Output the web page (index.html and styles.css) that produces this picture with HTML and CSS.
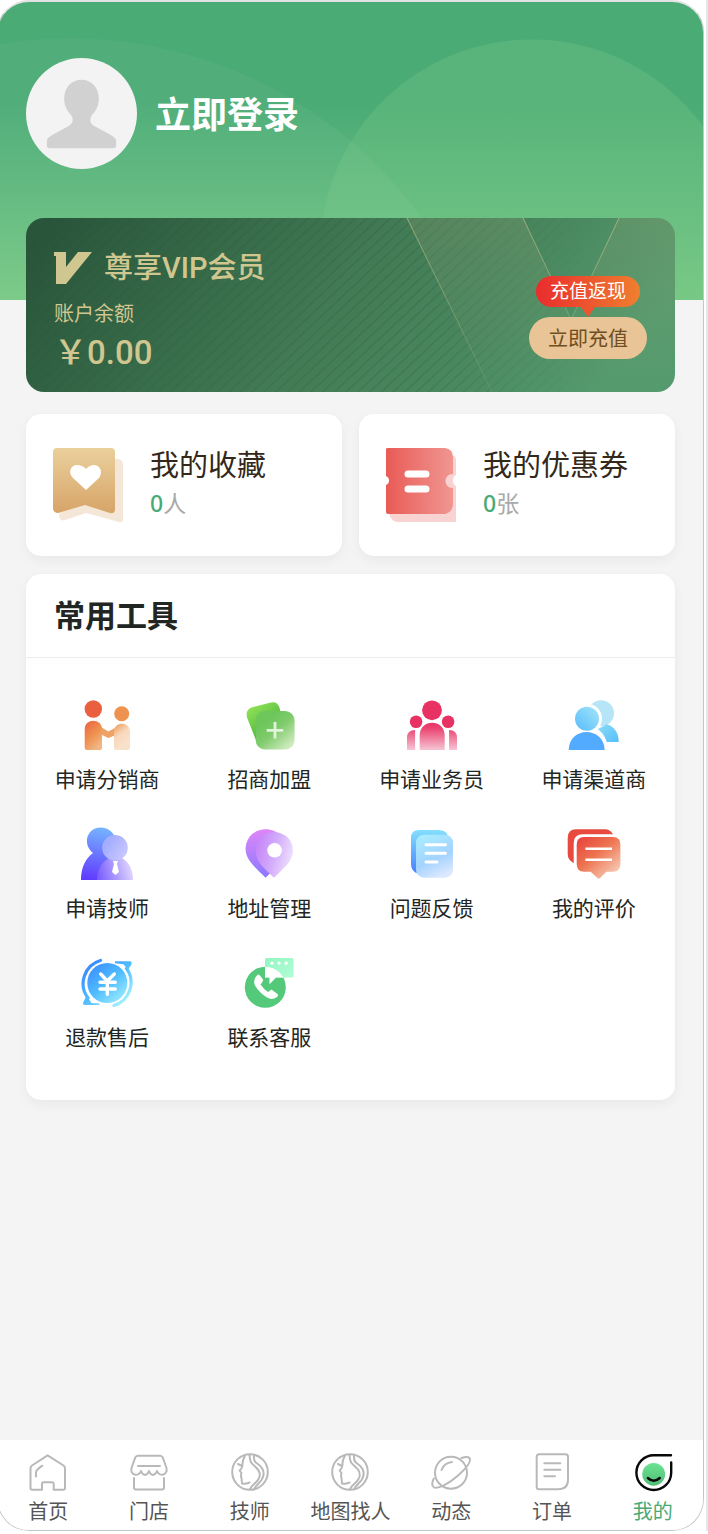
FILE: index.html
```html
<!DOCTYPE html>
<html lang="zh-CN">
<head>
<meta charset="utf-8">
<meta name="viewport" content="width=device-width, initial-scale=1">
<title>我的</title>
<link rel="stylesheet" href="styles.css">
</head>
<body>
<div class="phone">
  <main class="content">
    <a class="profile" href="#login">
      <svg class="avatar" viewBox="0 0 112 112" aria-hidden="true">
        <circle cx="56" cy="56" r="56" fill="#f3f3f3"/>
        <path d="M56 22c10 0 17.500 8 17.500 19 0 7-3 12-6.500 16-3 4-3 8 1 11l18 10c4 2.500 5 4 5 7v3q0 3-3 3H24q-3 0-3-3v-3c0-3 1-4.500 5-7l18-10c4-3 4-7 1-11-3.500-4-6.500-9-6.500-16 0-11 7.500-19 17.500-19z" fill="#d1d1d1"/>
      </svg>
      <h1 class="profile-name">立即登录</h1>
    </a>

    <section class="vip">
      <svg class="vip-art" viewBox="0 0 649 173" preserveAspectRatio="none" aria-hidden="true">
        <defs>
          <linearGradient id="vipBase" x1="0" y1="0.200" x2="1" y2="0.400">
            <stop offset="0" stop-color="#29553a"/><stop offset="0.500" stop-color="#417a54"/><stop offset="0.750" stop-color="#49875f"/><stop offset="1" stop-color="#549a6d"/>
          </linearGradient>
          <linearGradient id="vipPanel" x1="0" y1="0" x2="0" y2="1">
            <stop offset="0" stop-color="#9ea476" stop-opacity="0.220"/><stop offset="1" stop-color="#9ea476" stop-opacity="0"/>
          </linearGradient>
          <linearGradient id="vipGold" gradientUnits="userSpaceOnUse" x1="0" y1="0" x2="0" y2="173">
            <stop offset="0" stop-color="#c9c48d" stop-opacity="0.600"/><stop offset="1" stop-color="#c9c48d" stop-opacity="0.100"/>
          </linearGradient>
          <linearGradient id="stripeFade" x1="0" y1="0" x2="1" y2="0">
            <stop offset="0" stop-color="#fff" stop-opacity="0.300"/><stop offset="0.700" stop-color="#fff"/><stop offset="1" stop-color="#fff" stop-opacity="0"/>
          </linearGradient>
          <mask id="stripeMask"><rect width="560" height="173" fill="url(#stripeFade)"/></mask>
          <pattern id="stripes" width="8" height="8" patternUnits="userSpaceOnUse" patternTransform="rotate(47)">
            <rect width="1.500" height="8" fill="#1f4a30" opacity="0.180"/>
          </pattern>
        </defs>
        <rect width="649" height="173" fill="url(#vipBase)"/>
        <rect width="560" height="173" fill="url(#stripes)" mask="url(#stripeMask)"/>
        <path d="M381 0H497L545 101L593 0H649V173H466z" fill="url(#vipPanel)"/>
        <path d="M381 0L466 173M497 0L545 101M593 0L545 101" fill="none" stroke="url(#vipGold)"/>
      </svg>
      <div class="vip-info">
        <h2 class="vip-title">
          <svg class="vip-logo" viewBox="0 0 38 32" aria-hidden="true"><path d="M0 0h12v15L24 0h14L12 32H2V4H0z" fill="#d0c68f"/></svg>
          尊享VIP会员
        </h2>
        <p class="vip-label">账户余额</p>
        <p class="vip-amount">￥0.00</p>
      </div>
      <div class="vip-cta">
        <span class="badge">充值返现</span>
        <button class="recharge" type="button">立即充值</button>
      </div>
    </section>

    <section class="quick">
      <a class="quick-card" href="#favorites">
        <svg class="quick-icon" viewBox="0 0 70 76" aria-hidden="true">
          <defs><linearGradient id="fav" x1="0" y1="0" x2="0" y2="1"><stop offset="0" stop-color="#ead09c"/><stop offset="1" stop-color="#d7a468"/></linearGradient></defs>
          <path d="M58 12h6q6 0 6 6v54q0 4-4 3L33 66l-21 7q-6 2-6-6z" fill="#f4e7d7"/>
          <path d="M4 1h54q4 0 4 4v57q0 5-5 4L32 58 5 66q-4 0-5-4V5q0-4 4-4z" fill="url(#fav)"/>
          <path d="M33 43L20 31c-6-7-1-13 4-13 4 0 6 1 9 4 3-3 5-4 8-4 5 0 10 6 5 13z" fill="#fff"/>
        </svg>
        <div class="quick-text"><h3 class="quick-title">我的收藏</h3><p class="quick-count"><b>0</b>人</p></div>
      </a>
      <a class="quick-card" href="#coupons">
        <svg class="quick-icon" viewBox="0 0 70 76" aria-hidden="true">
          <defs><linearGradient id="coupon"><stop offset="0" stop-color="#e95b56"/><stop offset="1" stop-color="#f09692"/></linearGradient></defs>
          <path d="M12 75q-7 0-9-9L66 8q4 1 4 5v62z" fill="#f9d3d1"/>
          <path d="M70 28c-4 1-4 10 0 11z" fill="#fff"/>
          <path d="M0 2q0-1 2-1h57q8 1 8 9v17c-10 0-10 14 0 14v16q0 8-8 10H2q-2 0-2-2V38c4-1 4-8 0-9z" fill="url(#coupon)"/>
          <path d="M22 27h18M22 42h18" stroke="#fff" stroke-width="7" stroke-linecap="round"/>
        </svg>
        <div class="quick-text"><h3 class="quick-title">我的优惠券</h3><p class="quick-count"><b>0</b>张</p></div>
      </a>
    </section>

    <section class="tools">
      <h2 class="tools-title">常用工具</h2>
      <div class="tools-grid">
        <a class="tool" href="#distributor">
          <svg class="tool-icon" viewBox="0 0 56 56" aria-hidden="true">
            <defs><linearGradient id="t1" gradientUnits="userSpaceOnUse" x1="14" y1="12" x2="44" y2="50"><stop offset="0" stop-color="#ea5f3e"/><stop offset="0.500" stop-color="#ee9a58"/><stop offset="0.750" stop-color="#f8d9bd"/><stop offset="1" stop-color="#f9e2cc"/></linearGradient>
            <linearGradient id="t1a" x1="0" y1="0" x2="0.600" y2="1"><stop offset="0" stop-color="#ea613f"/><stop offset="0.600" stop-color="#ee9453"/><stop offset="1" stop-color="#f2b684"/></linearGradient></defs>
            <circle cx="14.300" cy="11" r="8.700" fill="#ea5f3e"/><circle cx="42.700" cy="15.700" r="7.500" fill="#ee9250"/>
            <path d="M22 29l7.300 4.500L37 29.500V37l-7.700 3L22 36.500z" fill="#efa266"/>
            <path d="M5.700 31c0-11 17.300-11 17.300 0v19q0 2-2 2H7.700q-2 0-2-2z" fill="url(#t1a)"/>
            <path d="M35 33.500c0-10.500 16-10.500 16 0V50q0 2-2 2H37q-2 0-2-2z" fill="url(#t1)"/>
          </svg>
          <span class="tool-label">申请分销商</span>
        </a>
        <a class="tool" href="#join">
          <svg class="tool-icon" viewBox="0 0 56 56" aria-hidden="true">
            <defs><linearGradient id="t2a" x1="0" y1="0" x2="0.700" y2="1"><stop offset="0" stop-color="#9bea5a"/><stop offset="1" stop-color="#3da737"/></linearGradient>
            <linearGradient id="t2b" x1="0.300" y1="0.200" x2="0.900" y2="0.900"><stop offset="0" stop-color="#6cc65a"/><stop offset="0.400" stop-color="#7fcb6c"/><stop offset="1" stop-color="#cfebbf"/></linearGradient></defs>
            <path d="M12 9L30 4.500q6-1.500 8.500 5l4 20-24 14q-4-1-5-5L6 19.500Q4 11 12 9z" fill="url(#t2a)"/>
            <rect x="14.600" y="13" width="39" height="38.500" rx="9.500" fill="url(#t2b)"/>
            <path d="M34 24v16.600M25.700 32.300h16.600" stroke="#e1f4d9" stroke-width="2.800"/>
          </svg>
          <span class="tool-label">招商加盟</span>
        </a>
        <a class="tool" href="#salesman">
          <svg class="tool-icon" viewBox="0 0 56 56" aria-hidden="true">
            <defs><linearGradient id="t3" gradientUnits="userSpaceOnUse" x1="0" y1="24" x2="0" y2="52"><stop offset="0" stop-color="#e83163"/><stop offset="0.250" stop-color="#ea4874"/><stop offset="1" stop-color="#f6c5d5"/></linearGradient></defs>
            <g fill="#e83263"><circle cx="28" cy="12.300" r="9.900"/><circle cx="12.100" cy="23.700" r="6.300"/><circle cx="44.100" cy="23.700" r="6.300"/></g>
            <path d="M15.700 52V37.500c0-17 25-17 25 0V52zM3 52V40q0-8 8.100-8v20zM45.100 52V32q7.900 0 7.900 8v12z" fill="url(#t3)"/>
          </svg>
          <span class="tool-label">申请业务员</span>
        </a>
        <a class="tool" href="#channel">
          <svg class="tool-icon" viewBox="0 0 56 56" aria-hidden="true">
            <defs><linearGradient id="t4" x1="1" y1="0" x2="0" y2="1"><stop offset="0" stop-color="#a4e6f9"/><stop offset="1" stop-color="#57bcfb"/></linearGradient>
            <linearGradient id="t4b" x1="0" y1="0" x2="1" y2="1"><stop offset="0" stop-color="#8adcf7"/><stop offset="1" stop-color="#57befb"/></linearGradient></defs>
            <circle cx="35" cy="15.300" r="13" fill="#b6e5f7"/>
            <path d="M41 26.300c8 3 11.700 9 11.700 17.700H40L32 31z" fill="url(#t4b)"/>
            <circle cx="21" cy="20.700" r="15" fill="#fff"/>
            <path d="M33 32q6 5 8 13l-8-3z" fill="#fff"/>
            <circle cx="21" cy="20.700" r="12" fill="url(#t4)"/>
            <path d="M2.700 52C3 28 38 28 38.700 52z" fill="#52abff"/>
          </svg>
          <span class="tool-label">申请渠道商</span>
        </a>
        <a class="tool" href="#technician">
          <svg class="tool-icon" viewBox="0 0 56 56" aria-hidden="true">
            <defs><linearGradient id="t5a" gradientUnits="userSpaceOnUse" x1="24" y1="0" x2="14" y2="53"><stop offset="0" stop-color="#76b6ff"/><stop offset="1" stop-color="#603bff"/></linearGradient>
            <linearGradient id="t5b" gradientUnits="userSpaceOnUse" x1="24" y1="22" x2="52" y2="42"><stop offset="0" stop-color="#a4adff"/><stop offset="1" stop-color="#ddd5ff"/></linearGradient>
            <linearGradient id="t5c" gradientUnits="userSpaceOnUse" x1="20" y1="50" x2="52" y2="42"><stop offset="0" stop-color="#7c61ff"/><stop offset="1" stop-color="#ddd2ff"/></linearGradient></defs>
            <path d="M14 26C3 17 8 .6 21.700.6S42 17 32 24l8 29H2c0-13 5-22 12-27z" fill="url(#t5a)"/>
            <path d="M18 53c0-11 5-18 12-22h13c7 4 11 12 11 22z" fill="url(#t5c)"/>
            <circle cx="36" cy="20.700" r="12.800" fill="url(#t5b)"/>
            <path d="M34 34h5l-1 3 2 8-3.500 3-3.500-3 2-8z" fill="#fff"/>
          </svg>
          <span class="tool-label">申请技师</span>
        </a>
        <a class="tool" href="#address">
          <svg class="tool-icon" viewBox="0 0 56 56" aria-hidden="true">
            <defs><linearGradient id="t6a" x1="0.500" y1="0" x2="0.500" y2="1"><stop offset="0" stop-color="#df86f9"/><stop offset="1" stop-color="#8979ff"/></linearGradient>
            <linearGradient id="t6b" x1="0" y1="0.300" x2="1" y2="0.600"><stop offset="0" stop-color="#c583f8"/><stop offset="0.500" stop-color="#d3acfb"/><stop offset="1" stop-color="#efe3fe"/></linearGradient></defs>
            <path d="M24.600 2.300c12 0 20 9 20 20 0 10-9 18-20 28.400C15 41 4.600 33 4.600 22.300c0-11 8-20 20-20z" fill="url(#t6a)"/>
            <path d="M33.300 5.300c11 0 18.700 8 18.700 18.500C52 34 43 41 33 50.700 24 42 14.600 35 14.600 23.800 14.600 13 23 5.300 33.300 5.300z" fill="url(#t6b)"/>
            <circle cx="33.600" cy="23.300" r="7.300" fill="#fff"/>
          </svg>
          <span class="tool-label">地址管理</span>
        </a>
        <a class="tool" href="#feedback">
          <svg class="tool-icon" viewBox="0 0 56 56" aria-hidden="true">
            <defs><linearGradient id="t7a" x1="0" y1="0" x2="0" y2="1"><stop offset="0" stop-color="#83dffd"/><stop offset="1" stop-color="#4780ff"/></linearGradient>
            <linearGradient id="t7b" x1="0.200" y1="0" x2="0.600" y2="1"><stop offset="0" stop-color="#a9ecff"/><stop offset="0.600" stop-color="#a4d3ff"/><stop offset="1" stop-color="#dbe8ff"/></linearGradient></defs>
            <path d="M15 3h20q7 0 9 6v34l-32 3q-5-3-5-9V11q0-8 8-8z" fill="url(#t7a)"/>
            <rect x="12" y="7.700" width="37" height="43" rx="8" fill="url(#t7b)"/>
            <path d="M22 17.700h19.500M22 26.300h19.500M22 35h11" stroke="#fff" stroke-width="3" stroke-linecap="round"/>
          </svg>
          <span class="tool-label">问题反馈</span>
        </a>
        <a class="tool" href="#reviews">
          <svg class="tool-icon" viewBox="0 0 56 56" aria-hidden="true">
            <defs><linearGradient id="t8" x1="0.100" y1="0" x2="0.900" y2="0.900"><stop offset="0" stop-color="#e9453f"/><stop offset="0.450" stop-color="#ed7450"/><stop offset="1" stop-color="#f7cdb9"/></linearGradient></defs>
            <path d="M10 2.300h29q5 0 8 5v12L7.500 36q-5.800-3-5.800-9V11q0-8.700 8.300-8.700z" fill="#e84a3f"/>
            <path d="M17 7.300h33v34H7.700V16q0-8.700 9.300-8.700z" fill="#fff"/>
            <path d="M18 10h29q7.400 0 7.400 7.500V37q0 7.700-7.400 7.700h-6.500L34 51q-1.300 1.500-2.600 0l-6.700-6.300H18q-7.300 0-7.300-7.700V17.500Q10.700 10 18 10z" fill="url(#t8)"/>
            <path d="M19.400 21.700H46M19.400 32.700H46" stroke="#fff" stroke-width="2.400"/>
          </svg>
          <span class="tool-label">我的评价</span>
        </a>
        <a class="tool" href="#refund">
          <svg class="tool-icon" viewBox="0 0 56 56" aria-hidden="true">
            <defs><linearGradient id="t9" gradientUnits="userSpaceOnUse" x1="12" y1="8" x2="44" y2="46"><stop offset="0" stop-color="#3b8cff"/><stop offset="0.500" stop-color="#4fbcff"/><stop offset="1" stop-color="#a0efff"/></linearGradient></defs>
            <circle cx="28.300" cy="27" r="20" fill="url(#t9)"/>
            <g fill="none" stroke="url(#t9)" stroke-width="3.200" stroke-linecap="round"><path d="M21.500 4.500A24 24 0 0 0 9 42M35 49.500A24 24 0 0 0 47.500 12.500"/></g>
            <path d="M7.500 39.500l5 7.500 8 .4v1.600H6q-3-.3-1.500-3zM36 5.300h14.500q3.500.3 1.500 4l-3 4.200-4.500-5.200L36 7.200z" fill="url(#t9)"/>
            <path d="M21.700 18l6.600 7 7-7M21 26.300h15.300M21 33h15.300M28.300 26v12.300" fill="none" stroke="#fff" stroke-width="3.400" stroke-linecap="round"/>
          </svg>
          <span class="tool-label">退款售后</span>
        </a>
        <a class="tool" href="#service">
          <svg class="tool-icon" viewBox="0 0 56 56" aria-hidden="true">
            <defs><clipPath id="serviceDisc"><circle cx="24.300" cy="31.300" r="20.500"/></clipPath>
            <linearGradient id="t10" x1="0" y1="0" x2="1" y2="1"><stop offset="0" stop-color="#94f5c0"/><stop offset="1" stop-color="#b4ffd8"/></linearGradient></defs>
            <circle cx="24.300" cy="31.300" r="20.500" fill="#54c97a"/>
            <path d="M25.500 2H51q1.500 0 1.500 1.500V20q0 1.500-1.500 1.500H35L28.600 28v-6.500H24v-18Q24 2 25.500 2z" fill="url(#t10)"/>
            <path d="M24 2h28.300v19.500H35L28.600 28v-6.500H24z" fill="#fff" clip-path="url(#serviceDisc)"/>
            <g fill="#fff"><circle cx="31" cy="7.200" r="1.600"/><circle cx="38" cy="7.200" r="1.600"/><circle cx="45" cy="7.200" r="1.600"/></g>
            <path d="M16.500 18.700q1.500-.6 2.500.8l3 4q.6 1.500-2.500 5 3 4.500 7.500 7.500l3.500-2.500 6 4.500q1 1.500-.5 3-5 3.500-10 .5-8-5-12-12-2.500-6 2.500-10.800z" fill="#fff"/>
          </svg>
          <span class="tool-label">联系客服</span>
        </a>
      </div>
    </section>
  </main>

  <nav class="tabs" aria-label="主导航">
    <a class="tab" href="#home">
      <svg class="tab-icon" viewBox="0 0 40 40" aria-hidden="true"><path d="M19.600 3.300L4 13.500q-1.500 1-1.500 3V36q0 1.700 1.700 1.700H14V32q0-1.700 1.700-1.700h8.300q1.700 0 1.700 1.700v5.700h9.700q1.600 0 1.600-1.700V16.500q0-2-1.500-3zM8 24.500v-4q0-2.500 6.300-6.800"/></svg>
      首页
    </a>
    <a class="tab" href="#shops">
      <svg class="tab-icon" viewBox="0 0 40 40" aria-hidden="true"><path d="M9 3.700h22q2 0 2.800 2L37.500 16c1 4-1.500 6.500-4 6.700-4 .3-5.500-3.700-5.500-3.700s-1.500 4-4 4-4-4-4-4-1.500 4-4 4-4-4-4-4-1.500 4-5.500 3.700C3 22.500 1.500 19 2.500 16L6.200 5.700q.8-2 2.800-2zM9 14h22M5 26v9.500q0 2 2 2h26q2 0 2-2V26"/></svg>
      门店
    </a>
    <a class="tab" href="#technicians">
      <svg class="tab-icon" viewBox="0 0 40 40" aria-hidden="true"><circle cx="20" cy="20" r="17.800"/><path d="M15 3.500q-3 6-2.500 9.500-.5 4-3 5.500l2 2.500q-1 3 0 5l.5 5.500q3 1 7.500-1M19.500 3c.5 6 1 8 5 11 5 4 7 8 4 13-2 4-6 5-8.500 10M24 3q-.5 6 2.500 8c6 4 10 9 5 17-3 4-5 5-7 8.500M8 12l3 1.500"/></svg>
      技师
    </a>
    <a class="tab" href="#map">
      <svg class="tab-icon" viewBox="0 0 40 40" aria-hidden="true"><circle cx="20" cy="20" r="17.800"/><path d="M15 3.500q-3 6-2.500 9.500-.5 4-3 5.500l2 2.500q-1 3 0 5l.5 5.500q3 1 7.500-1M19.500 3c.5 6 1 8 5 11 5 4 7 8 4 13-2 4-6 5-8.500 10M24 3q-.5 6 2.500 8c6 4 10 9 5 17-3 4-5 5-7 8.500M8 12l3 1.500"/></svg>
      地图找人
    </a>
    <a class="tab" href="#moments">
      <svg class="tab-icon" viewBox="0 0 40 40" aria-hidden="true"><circle cx="20" cy="20.700" r="16"/><path d="M30.500 6q6-2 8 0c2 3-3 10-12 18S7 37 3 35.300q-3.500-2-.2-8.800M10.500 18q2.500-7 10.500-8"/></svg>
      动态
    </a>
    <a class="tab" href="#orders">
      <svg class="tab-icon" viewBox="0 0 40 40" aria-hidden="true"><path d="M7 2.200h26.500q2.500 0 2.500 2.500v23q0 9.500-10 9.500H7q-2.300 0-2.300-2.500v-30q0-2.500 2.300-2.500zM12.300 11.300h16M12.300 17.700h16M12.300 24.300H23"/></svg>
      订单
    </a>
    <a class="tab tab-active" href="#mine" aria-current="page">
      <svg class="tab-icon" viewBox="0 0 40 40" aria-hidden="true">
        <defs><linearGradient id="mine" x1="0" y1="0" x2="0" y2="1"><stop offset="0" stop-color="#6be293"/><stop offset="1" stop-color="#52bd76"/></linearGradient></defs>
        <circle cx="20.700" cy="22.300" r="11.400" fill="url(#mine)" stroke="none"/>
        <path d="M38 3.200H20.700A17.400 17.400 0 1 0 38.200 20.700V10.500" stroke="#080808" stroke-width="2.400"/>
        <path d="M14.800 26q6 5.500 12 0" stroke="#080808" stroke-width="2.400"/>
      </svg>
      我的
    </a>
  </nav>
</div>
</body>
</html>
```

FILE: styles.css
```css
* {
  box-sizing: border-box;
}

body {
  margin: 0;
  padding-right: 2px;
  overflow-x: hidden;
  background: #fff;
  border-right: 2px solid #e4e7f0;
  font-family: "Liberation Sans", "Noto Sans CJK SC", sans-serif;
  color: #222623;
}

h1,
h2,
h3,
p {
  margin: 0;
}

a {
  color: inherit;
  text-decoration: none;
}

svg {
  display: block;
  flex: none;
}

.phone {
  display: flex;
  flex-direction: column;
  min-height: calc(100vh - 3px);
  margin-left: -3px;
  overflow: hidden;
  background: #f4f4f4;
  border: 1px solid #c4c8c5;
  border-top: 2px solid #e2e2e2;
  border-radius: 32px;
}

.content {
  flex: 1;
  padding: 56px 28px 28px;
  background:
    radial-gradient(circle at 72px 471px, rgb(255 255 255 / 4%) 434px, transparent 435px) 0 0 / 100% 298px no-repeat,
    radial-gradient(circle at right 171px top 249px, rgb(120 200 135 / 30%) 211px, transparent 212px) 0 0 / 100% 298px no-repeat,
    linear-gradient(#4aab75 100px, #64bc7f 215px, #78c984) 0 0 / 100% 298px no-repeat;
}

.profile {
  display: flex;
  align-items: center;
  gap: 18px;
  margin-bottom: 49px;
  color: #fff;
}

.avatar {
  width: 111px;
  height: 111px;
}

.profile-name {
  padding-top: 4px;
  font-size: 36px;
  line-height: 48px;
}

.vip {
  position: relative;
  display: flex;
  align-items: flex-end;
  justify-content: space-between;
  margin-bottom: 22px;
  padding: 28px 28px 17px;
  overflow: hidden;
  border-radius: 18px;
  color: #d0c68f;
}

.vip-art {
  position: absolute;
  inset: 0;
  width: 100%;
  height: 100%;
}

.vip-info,
.vip-cta {
  position: relative;
}

.vip-title {
  display: flex;
  align-items: center;
  gap: 12px;
  margin-bottom: 10px;
  font-family: Roboto, "Noto Sans CJK SC", sans-serif;
  font-size: 29px;
  font-weight: 500;
  line-height: 44px;
}

.vip-logo {
  width: 38px;
  height: 32px;
}

.vip-label {
  margin-bottom: 3px;
  font-size: 20px;
  line-height: 28px;
}

.vip-amount {
  font-family: Roboto, "Noto Sans CJK SC", sans-serif;
  font-size: 33px;
  font-weight: 500;
  line-height: 44px;
}

.vip-cta {
  display: flex;
  flex-direction: column;
  align-items: center;
  gap: 10px;
  margin-bottom: 16px;
}

.badge {
  position: relative;
  padding: 0 14px;
  border-radius: 16px;
  background: linear-gradient(90deg, #e92c2d, #ef7f2f);
  color: #fff;
  font-size: 19px;
  line-height: 31px;
}

.badge::after {
  content: "";
  position: absolute;
  top: 100%;
  left: 50%;
  margin-left: -7px;
  border: 7px solid transparent;
  border-top: 10px solid #ec552e;
  border-bottom: 0;
}

.recharge {
  padding: 2px 19px 0;
  border: 0;
  border-radius: 21px;
  background: #e9c497;
  color: #6f4e20;
  font: inherit;
  font-size: 20px;
  line-height: 40px;
}

.quick {
  display: grid;
  grid-template-columns: 1fr 1fr;
  gap: 17px;
  margin-bottom: 18px;
}

.quick-card,
.tools {
  border-radius: 15px;
  background: #fff;
  box-shadow: 0 4px 12px rgb(0 0 0 / 5%);
}

.quick-card {
  display: flex;
  align-items: center;
  gap: 27px;
  padding: 33px 27px;
}

.quick-icon {
  width: 70px;
  height: 76px;
}

.quick-text {
  padding-bottom: 4px;
}

.quick-title {
  margin-bottom: 4px;
  color: #33281a;
  font-size: 29px;
  font-weight: 400;
  line-height: 36px;
}

.quick-count {
  color: #a9a9a9;
  font-family: "Noto Sans", "Noto Sans CJK SC", sans-serif;
  font-size: 23px;
  line-height: 30px;
}

.quick-count b {
  color: #49aa75;
  font-weight: 500;
}

.tools-title {
  padding: 21px 28px 19px;
  border-bottom: 1px solid #ececec;
  font-size: 31px;
  line-height: 43px;
}

.tools-grid {
  display: grid;
  grid-template-columns: repeat(4, 1fr);
  row-gap: 33px;
  padding: 40px 0 48px;
}

.tool {
  display: flex;
  flex-direction: column;
  align-items: center;
  gap: 12px;
}

.tool-icon {
  width: 56px;
  height: 56px;
}

.tool-label {
  font-size: 21px;
  line-height: 28px;
  white-space: nowrap;
}

.tabs {
  display: grid;
  grid-template-columns: repeat(7, minmax(0, 1fr));
  padding: 12px 0 6px;
  background: #fff;
}

.tab {
  display: flex;
  flex-direction: column;
  align-items: center;
  gap: 8px;
  color: #555;
  font-size: 20px;
  line-height: 24px;
  white-space: nowrap;
}

.tab-active {
  color: #49aa75;
}

.tab-icon {
  width: 40px;
  height: 40px;
  fill: none;
  stroke: #b9b9b9;
  stroke-width: 2;
  stroke-linecap: round;
  stroke-linejoin: round;
}
```
